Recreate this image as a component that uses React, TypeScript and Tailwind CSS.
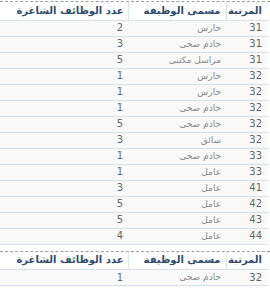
const rows: [string, string, string][] = [
  ['31', 'حارس', '2'],
  ['31', 'خادم صحى', '3'],
  ['31', 'مراسل مكتبى', '5'],
  ['32', 'حارس', '1'],
  ['32', 'حارس', '1'],
  ['32', 'خادم صحى', '1'],
  ['32', 'خادم صحى', '5'],
  ['32', 'سائق', '3'],
  ['33', 'خادم صحى', '1'],
  ['33', 'عامل', '1'],
  ['41', 'عامل', '3'],
  ['42', 'عامل', '5'],
  ['43', 'عامل', '5'],
  ['44', 'عامل', '4'],
];

const extra: [string, string, string][] = [['32', 'خادم صحى', '1']];

function JobsTable({ data }: { data: [string, string, string][] }) {
  return (
    <div className="border-t border-dashed border-[#a0a0a0]">
      <table dir="rtl" className="w-[268px] border-collapse leading-none" style={{ fontFamily: '"DejaVu Sans", sans-serif' }}>
        <thead>
          <tr className="h-[18px] bg-white text-[#2f4d6d] text-[10px] border-b border-[#d5e1ee]">
            <th className="w-[42px] pr-[6px] text-right font-bold border-l border-[#dde5ee]">المرتبة</th>
            <th className="w-[98px] pr-[5px] text-right font-bold border-l border-[#dde5ee]">مسمى الوظيفة</th>
            <th className="pr-[4px] text-right font-bold">عدد الوظائف الشاغرة</th>
          </tr>
        </thead>
        <tbody>
          {data.map((r, i) => (
            <tr key={i} className="h-[16px] bg-[#f9f9f9] border-b border-[#d5e1ee]">
              <td className="pr-[6px] text-[10px] text-[#666]">{r[0]}</td>
              <td className="pr-[5px] text-[9px] text-[#8a8a8a]">{r[1]}</td>
              <td className="pr-[5px] text-[10px] text-[#666]">{r[2]}</td>
            </tr>
          ))}
        </tbody>
      </table>
    </div>
  );
}

export default function App() {
  return (
    <div className="w-[270px] h-[300px] bg-white pt-[1px]">
      <JobsTable data={rows} />
      <div className="h-[6px]" />
      <JobsTable data={extra} />
    </div>
  );
}
